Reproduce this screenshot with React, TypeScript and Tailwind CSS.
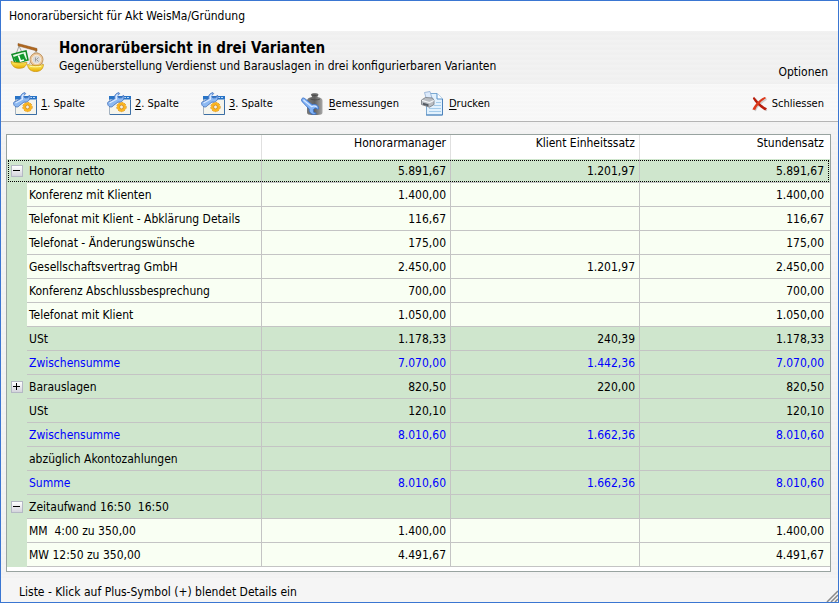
import type { ReactNode } from "react";

type Row = {
  label: string;
  values: [string, string, string];
  kind?: "detail" | "total";
  toggle?: "open" | "closed";
  focused?: boolean;
};

const columns = ["Honorarmanager", "Klient Einheitssatz", "Stundensatz"];

const rows: Row[] = [
  { label: "Honorar netto", values: ["5.891,67", "1.201,97", "5.891,67"], toggle: "open", focused: true },
  { label: "Konferenz mit Klienten", values: ["1.400,00", "", "1.400,00"], kind: "detail" },
  { label: "Telefonat mit Klient - Abklärung Details", values: ["116,67", "", "116,67"], kind: "detail" },
  { label: "Telefonat - Änderungswünsche", values: ["175,00", "", "175,00"], kind: "detail" },
  { label: "Gesellschaftsvertrag GmbH", values: ["2.450,00", "1.201,97", "2.450,00"], kind: "detail" },
  { label: "Konferenz Abschlussbesprechung", values: ["700,00", "", "700,00"], kind: "detail" },
  { label: "Telefonat mit Klient", values: ["1.050,00", "", "1.050,00"], kind: "detail" },
  { label: "USt", values: ["1.178,33", "240,39", "1.178,33"] },
  { label: "Zwischensumme", values: ["7.070,00", "1.442,36", "7.070,00"], kind: "total" },
  { label: "Barauslagen", values: ["820,50", "220,00", "820,50"], toggle: "closed" },
  { label: "USt", values: ["120,10", "", "120,10"] },
  { label: "Zwischensumme", values: ["8.010,60", "1.662,36", "8.010,60"], kind: "total" },
  { label: "abzüglich Akontozahlungen", values: ["", "", ""] },
  { label: "Summe", values: ["8.010,60", "1.662,36", "8.010,60"], kind: "total" },
  { label: "Zeitaufwand 16:50  16:50", values: ["", "", ""], toggle: "open" },
  { label: "MM  4:00 zu 350,00", values: ["1.400,00", "", "1.400,00"], kind: "detail" },
  { label: "MW 12:50 zu 350,00", values: ["4.491,67", "", "4.491,67"], kind: "detail" },
];

function ScalesIcon() {
  return (
    <svg width="36" height="34" viewBox="0 0 36 34" aria-hidden="true">
      <defs>
        <linearGradient id="pan" x1="0" y1="0" x2="0" y2="1">
          <stop offset="0" stopColor="#fff36a" />
          <stop offset="1" stopColor="#e8ac00" />
        </linearGradient>
      </defs>
      <path d="M9 5 3.500 20M9 5l7 15M26 9.500 19.500 23M26 9.500l6.500 14" stroke="#a9a9a2" fill="none" />
      <path d="M8 2.500 27 7.500v2.500L8 4.800Z" fill="#b0681f" stroke="#8a4c12" strokeWidth=".5" />
      <path d="m2 13.500 9-2.500 5-1 2 9-13 3Z" fill="#eafbe8" stroke="#108a25" strokeWidth="1.500" />
      <path d="m3.500 16 10-3.500 3 7-10 3Z" fill="#129a2c" />
      <path d="m8.500 14.500 2 5.500 3.500-1" fill="none" stroke="#fff" strokeWidth="1.600" />
      <circle cx="26.500" cy="18.500" r="6.500" fill="#ecc79b" stroke="#c39a68" />
      <circle cx="26.500" cy="18.500" r="4.200" fill="#dadada" stroke="#f4ead8" />
      <path d="M25.500 16.500v4m3-4-2 2 2 2" stroke="#9a9a9a" fill="none" />
      <path d="M1 20.500c4 1.500 12 1.800 16 .8-1 5-4 6-8 6s-7-2-8-6.800Z" fill="url(#pan)" stroke="#c98f08" strokeWidth=".7" />
      <path d="M17.500 23.500c4 1.300 12 1.300 16 0-.5 5.500-4 7-8 7s-7.500-2-8-7Z" fill="url(#pan)" stroke="#c98f08" strokeWidth=".7" />
      <path d="M20 25.200c3 .8 8 .8 11 0" stroke="#fffaa8" fill="none" />
    </svg>
  );
}

const wrenchShape =
  "M.8 12.600C0 10.800 1 9.600 2.400 9.600L7.600 6.600C7 3.600 8.800 1.200 12 .7l.6.900-2 2.200 1.300 2.200 3-.2 1.100-2.400.9.400c.8 3.800-2 6.800-6 6.300L6.300 13.600c-.8 1.900-4.500 2-5.500-1Z";

function ColumnIcon() {
  return (
    <svg width="24" height="24" viewBox="0 0 24 24" aria-hidden="true">
      <path d="M2.500 5.500h21v17h-21Z" fill="#f5f4ec" stroke="#a5b3c1" />
      <path d="M2 4h22v3.500H2Z" fill="#2873c6" />
      <path d="M17 5h2v1h-2ZM20 5h2v1h-2Z" fill="#b8d8f8" />
      <path d="M3 22.500h20.500V8" stroke="#3b6ea5" fill="none" />
      <circle cx="14.500" cy="15" r="4.600" fill="none" stroke="#d58a10" strokeDasharray="2 1" />
      <circle cx="14.500" cy="15" r="3.200" fill="#f3f0e4" stroke="#fbb520" strokeWidth="2.600" />
      <circle cx="14.500" cy="15" r="1.900" fill="none" stroke="#c97c10" strokeWidth=".7" />
      <path d={wrenchShape} fill="#8db9f2" stroke="#4674bd" strokeWidth=".9" />
      <path d="m2.500 11 7-3.800c-.7-2.200.1-4 1.200-4.800" fill="none" stroke="#dcebff" strokeWidth="1.200" />
    </svg>
  );
}

function WeightIcon() {
  return (
    <svg width="24" height="24" viewBox="0 0 24 24" aria-hidden="true">
      <defs>
        <linearGradient id="iron" x1="0" x2="1">
          <stop offset="0" stopColor="#7a7a7a" />
          <stop offset=".5" stopColor="#606060" />
          <stop offset="1" stopColor="#a8a8a8" />
        </linearGradient>
      </defs>
      <path d="M10 2.500C10 .7 17.500.7 17.500 2.500c0 1-1 1.500-1 2.500 3 .6 5 1.500 5 3.500v12c0 1.800-2 2.500-5 2.500H11c-3 0-5-.7-5-2.500v-12C6 6.500 8 5.600 11 5c0-1-1-1.500-1-2.500Z" fill="url(#iron)" />
      <path d="M10.800 3c1.500.8 4.500.8 6 0M9.500 7c3 1.200 6.500 1.200 9.500 0" stroke="#454545" fill="none" strokeWidth=".8" />
      <path
        d="M.6 7.800C.6 6 2.600 5.400 3.800 6.600l7.400 6c3.200-1 6.500.9 6.500 4.200l-.9.400-2.400-1.200-2.200 1.700.6 2.700 2.300.7-.2 1c-3.800 1.200-7-1.200-6.700-5L1.500 10C.8 9.400.6 8.600.6 7.800Z"
        fill="#84b4f6"
        stroke="#3b70c4"
        strokeWidth=".9"
      />
      <path d="m2.500 8 8 6.600c2-.9 4-.6 5.200.4" fill="none" stroke="#dcebff" strokeWidth="1.200" />
    </svg>
  );
}

function PrintIcon() {
  return (
    <svg width="24" height="26" viewBox="0 0 24 26" aria-hidden="true">
      <path d="M5.500 2.500H16l5.500 5.500v16h-16Z" fill="#e2f1fd" stroke="#7ba9d2" />
      <path d="M16 2.500V8h5.500" fill="#fff" stroke="#5790c8" />
      <path d="M15 11.500h5M13 14.500h7M8 17.500h12M8 20.500h12" stroke="#a4cbea" />
      <path d="M5 24h16.500V8" stroke="#4d82bb" fill="none" />
      <path d="m3.500 1.500 5.500-1L11 7l-5.500 1.500Z" fill="#dceafb" stroke="#8facd0" strokeWidth=".8" />
      <path d="m.5 9 4-2.500 7 .5 1.500 2.500v4l-4.500 2.700-8-2.700Z" fill="#b9bdc2" stroke="#73777d" strokeWidth=".8" />
      <path d="m1 9.300 7.500 2.200L12.800 9.500" stroke="#f2f4f6" fill="none" strokeWidth="1.200" />
      <path d="m2 11.800 5.500 1.500v2L2 13.800Z" fill="#555b63" />
    </svg>
  );
}

function CloseIcon() {
  return (
    <svg width="16" height="16" viewBox="0 0 16 16" aria-hidden="true">
      <path d="M3 2.500c3 4.500 7 9 12 12M14.500 3C10 6 5 10 3 15" stroke="#9b9b9b" strokeWidth="1.600" fill="none" opacity=".45" />
      <path d="M2 .8c3 4.200 8 9.200 13 11.400l-1.800 2.200C8.500 12 3.500 7 .8 2.400Z" fill="#b81c0a" />
      <path d="M14.300 2C9.500 5 5 9.500 3.200 14L.4 13.600C2.500 8.500 7.500 3.500 12.500 1Z" fill="#dc3a1c" />
    </svg>
  );
}

function ToolButton({ icon, hotkey, text }: { icon: ReactNode; hotkey: string; text: string }) {
  return (
    <button type="button" className="flex h-8 items-center gap-1 whitespace-pre">
      {icon}
      <span>
        <span className="underline underline-offset-2">{hotkey}</span>
        {text}
      </span>
    </button>
  );
}

function Toggle({ state, label }: { state: "open" | "closed"; label: string }) {
  return (
    <button
      type="button"
      aria-label={label}
      aria-expanded={state === "open"}
      className="mx-auto flex size-3 items-center justify-center border border-[#b4b8c4] bg-linear-to-b from-white to-[#d4d4dc]"
    >
      <svg width="8" height="8" viewBox="0 0 8 8" aria-hidden="true" className="shrink-0" shapeRendering="crispEdges">
        <path d={state === "open" ? "M0 3h7v1H0Z" : "M0 3h7v1H0ZM3 0h1v7H3Z"} fill="#000" />
      </svg>
    </button>
  );
}

export default function App() {
  return (
    <main className="flex min-h-screen flex-col border border-[#3a76d2] bg-[repeating-linear-gradient(to_bottom,#f3f3f3_0px,#f1f1f1_3px,#f5f5f5_5px)] font-['DejaVu_Sans_Condensed','DejaVu_Sans',sans-serif] text-xs text-black">
      <div className="flex h-[30px] items-center bg-white px-2">Honorarübersicht für Akt WeisMa/Gründung</div>

      <header className="flex h-[53px] items-center bg-[repeating-linear-gradient(to_bottom,#f2f2f2_0px,#f0f0f0_2px,#efefef_3px,#f3f3f3_5px)] pr-[10px] pl-[9px]">
        <ScalesIcon />
        <div className="ml-[13px] grow pb-[2px]">
          <h1 className="text-[15px] leading-[18px] font-bold">Honorarübersicht in drei Varianten</h1>
          <p className="leading-[18px]">Gegenüberstellung Verdienst und Barauslagen in drei konfigurierbaren Varianten</p>
        </div>
        <button type="button" className="mb-1 self-end">Optionen</button>
      </header>

      <nav aria-label="Werkzeuge" className="flex h-[38px] items-center border-b border-[#b4b4b4] bg-[repeating-linear-gradient(to_bottom,#f9f9f9_0px,#f6f6f6_2px,#f8f8f8_4px)] pt-[3px] pr-[14px] pl-3 text-[11px]">
        <div className="flex gap-[22px]">
          <ToolButton icon={<ColumnIcon />} hotkey="1" text=". Spalte" />
          <ToolButton icon={<ColumnIcon />} hotkey="2" text=". Spalte" />
          <ToolButton icon={<ColumnIcon />} hotkey="3" text=". Spalte" />
        </div>
        <div className="ml-7 flex grow gap-[22px]">
          <ToolButton icon={<WeightIcon />} hotkey="B" text="emessungen" />
          <ToolButton icon={<PrintIcon />} hotkey="D" text="rucken" />
        </div>
        <button type="button" className="flex h-8 items-center gap-1">
          <CloseIcon />
          Schliessen
        </button>
      </nav>

      <section className="mt-3 mr-[7px] mb-[6px] ml-[5px] border border-[#98a3a0] bg-white pb-1">
        <table className="w-full table-fixed border-separate border-spacing-0">
          <colgroup>
            <col className="w-5" />
            <col className="w-[235px]" />
            <col className="w-[189px]" />
            <col className="w-[189px]" />
            <col />
          </colgroup>
          <thead>
            <tr className="h-6">
              <th colSpan={2} aria-label="Position" className="border-r border-[#e0e0e0] p-0" />
              {columns.map((name) => (
                <th key={name} scope="col" className="border-r border-[#e0e0e0] p-0 pr-1 pb-2 text-right leading-4 font-normal last:border-r-0 last:pr-[6px]">
                  {name}
                </th>
              ))}
            </tr>
          </thead>
          <tbody>
            {rows.map((row, index) => {
              const fill = row.kind === "detail" ? "bg-[#f9fff3]" : "bg-[#cfe6cd]";
              const ink = row.kind === "total" ? "text-[#0000ff]" : "";
              return (
                <tr
                  key={index}
                  className={`h-6 ${ink} ${row.focused ? "outline-1 -outline-offset-2 outline-black outline-dotted" : ""}`}
                >
                  <td className="bg-[#cfe6cd] p-0">
                    {row.toggle && <Toggle state={row.toggle} label={row.label} />}
                  </td>
                  <th scope="row" className={`border-r border-b border-[#c4c4c4] p-0 pl-[2px] text-left leading-4 font-normal whitespace-pre ${fill}`}>
                    {row.label}
                  </th>
                  {row.values.map((value, column) => (
                    <td key={column} className={`border-r border-b border-[#c4c4c4] p-0 pr-1 text-right leading-4 last:border-r-0 last:pr-[6px] ${fill}`}>
                      {value}
                    </td>
                  ))}
                </tr>
              );
            })}
          </tbody>
        </table>
      </section>

      <footer className="relative flex grow items-center bg-[#f5f5f5] pt-[3px] pl-[18px]">
        Liste - Klick auf Plus-Symbol (+) blendet Details ein
        <svg width="12" height="12" viewBox="0 0 12 12" aria-hidden="true" className="absolute right-0 bottom-0">
          <path d="M1 12 12 1M5 12l7-7M9 12l3-3" stroke="#8a8a8a" strokeWidth="1.500" />
        </svg>
      </footer>
    </main>
  );
}
